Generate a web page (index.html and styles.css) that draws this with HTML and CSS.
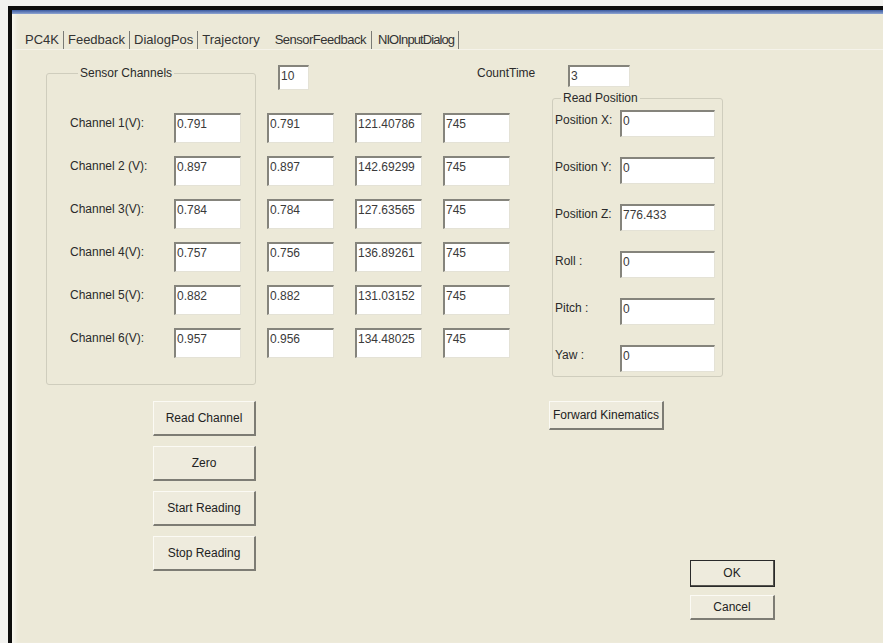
FILE: index.html
```html
<!DOCTYPE html>
<html lang="en">
<head>
<meta charset="utf-8">
<title>SensorFeedback</title>
<link rel="stylesheet" href="styles.css">
</head>
<body>
<div class="window">
  <div class="caption"></div>
  <div class="client">
    <div class="tabs">
      <span class="tab sep first">PC4K</span>
      <span class="tab sep">Feedback</span>
      <span class="tab sep">DialogPos</span>
      <span class="tab">Trajectory</span>
      <span class="tab sep active">SensorFeedback</span>
      <span class="tab sep last">NIOInputDialog</span>
    </div>

    <div class="page">
      <div class="col-left">
        <fieldset class="group sensors">
          <legend>Sensor Channels</legend>
          <div class="channel-rows">
            <span class="lbl">Channel 1(V):</span><div class="edit">0.791</div>
            <span class="lbl">Channel 2 (V):</span><div class="edit">0.897</div>
            <span class="lbl">Channel 3(V):</span><div class="edit">0.784</div>
            <span class="lbl">Channel 4(V):</span><div class="edit">0.757</div>
            <span class="lbl">Channel 5(V):</span><div class="edit">0.882</div>
            <span class="lbl">Channel 6(V):</span><div class="edit">0.957</div>
          </div>
        </fieldset>
        <div class="btn-stack">
          <button class="btn">Read Channel</button>
          <button class="btn">Zero</button>
          <button class="btn">Start Reading</button>
          <button class="btn">Stop Reading</button>
        </div>
      </div>

      <div class="col-main">
        <div class="top-row">
          <div class="edit count">10</div>
          <span class="lbl counttime">CountTime</span>
          <div class="edit time">3</div>
        </div>
        <div class="lower">
          <div class="readings">
            <div class="edit">0.791</div><div class="edit">121.40786</div><div class="edit">745</div>
            <div class="edit">0.897</div><div class="edit">142.69299</div><div class="edit">745</div>
            <div class="edit">0.784</div><div class="edit">127.63565</div><div class="edit">745</div>
            <div class="edit">0.756</div><div class="edit">136.89261</div><div class="edit">745</div>
            <div class="edit">0.882</div><div class="edit">131.03152</div><div class="edit">745</div>
            <div class="edit">0.956</div><div class="edit">134.48025</div><div class="edit">745</div>
          </div>
          <div class="col-right">
            <fieldset class="group position">
              <legend>Read Position</legend>
              <div class="pos-rows">
                <span class="lbl">Position X:</span><div class="edit">0</div>
                <span class="lbl">Position Y:</span><div class="edit">0</div>
                <span class="lbl">Position Z:</span><div class="edit">776.433</div>
                <span class="lbl">Roll :</span><div class="edit">0</div>
                <span class="lbl">Pitch :</span><div class="edit">0</div>
                <span class="lbl">Yaw :</span><div class="edit">0</div>
              </div>
            </fieldset>
            <button class="btn fk">Forward Kinematics</button>
            <div class="dlg-buttons">
              <button class="btn default">OK</button>
              <button class="btn cancel">Cancel</button>
            </div>
          </div>
        </div>
      </div>
    </div>
  </div>
</div>
</body>
</html>
```

FILE: styles.css
```css
* {
  box-sizing: border-box;
}

html,
body {
  margin: 0;
  height: 100%;
}

body {
  background: #f2f2ef;
  font-family: "Liberation Sans", Arial, sans-serif;
  font-size: 12px;
  color: #262626;
  overflow: hidden;
}

/* dialog frame: dark outer edge with a thin blue caption strip */
.window {
  margin: 6px 0 0 8px;
  height: 637px;
  border-top: 4px solid #0d0d0d;
  border-left: 4px solid #0d0d0d;
  display: flex;
  flex-direction: column;
  background: #ece9d8;
}

.caption {
  height: 4px;
  background: linear-gradient(#39599f, #8ea4d2);
}

.client {
  flex: 1;
  box-shadow: inset 6px 0 4px -3px #f8f7f1;
}

/* tab strip */
.tabs {
  height: 36px;
  padding: 17px 0 0 13px;
  display: flex;
  align-items: flex-start;
  font-size: 13px;
  color: #333;
  border-bottom: 1px solid #f5f3ea;
}

.tab {
  line-height: 18px;
  padding: 0 4px;
  white-space: nowrap;
}

.tab.first {
  padding-left: 0;
}

.tab.sep {
  border-right: 1px solid #7a7a75;
}

.tab.active {
  padding: 0 5px 0 11px;
  letter-spacing: -0.5px;
}

.tab.last {
  padding-left: 6px;
  letter-spacing: -0.9px;
}

/* tab page body */
.page {
  display: flex;
  padding-left: 34px;
}

.col-left {
  width: 210px;
  display: flex;
  flex-direction: column;
}

.group {
  margin: 0;
  border: 1px solid #cfcdbd;
  border-radius: 3px;
  min-width: 0;
}

.group legend {
  padding: 0 2px;
  line-height: 14px;
  color: #2a2a2a;
}

.sensors {
  margin-top: 16px;
  width: 210px;
  padding: 33px 0 26px 23px;
}

.sensors legend {
  margin-left: 8px;
}

.channel-rows {
  display: grid;
  grid-template-columns: 104px 67px;
  grid-auto-rows: 30px;
  row-gap: 13px;
}

.lbl {
  line-height: 14px;
  padding-top: 3px;
  white-space: nowrap;
  color: #2a2a2a;
}

/* sunken edit box */
.edit {
  background: #fff;
  border-top: 2px solid #85847c;
  border-left: 2px solid #85847c;
  border-right: 1px solid #e4e2d6;
  border-bottom: 1px solid #e4e2d6;
  padding: 2px 0 0 1px;
  line-height: 14px;
  color: #3a3a3a;
  white-space: nowrap;
  overflow: hidden;
}

/* raised push buttons */
.btn {
  font: inherit;
  color: #222;
  background: #eeebdd;
  border-top: 1px solid #fbfaf4;
  border-left: 1px solid #fbfaf4;
  border-right: 2px solid #7d7c74;
  border-bottom: 2px solid #7d7c74;
  padding: 0;
  margin: 0;
  text-align: center;
  white-space: nowrap;
}

.btn-stack {
  margin: 16px 0 0 107px;
  display: flex;
  flex-direction: column;
  gap: 10px;
}

.btn-stack .btn {
  width: 103px;
  height: 35px;
}

.col-main {
  margin-left: 11px;
  display: flex;
  flex-direction: column;
}

.top-row {
  margin-top: 15px;
  display: flex;
  align-items: flex-start;
}

.edit.count {
  margin-left: 11px;
  width: 31px;
  height: 25px;
}

.counttime {
  margin-left: 168px;
  width: 91px;
  padding-top: 1px;
}

.edit.time {
  width: 62px;
  height: 22px;
}

.lower {
  display: flex;
  align-items: flex-start;
}

.readings {
  margin-top: 23px;
  display: grid;
  grid-template-columns: 88px 88px 67px;
  grid-auto-rows: 30px;
  row-gap: 13px;
}

.readings .edit {
  width: 67px;
}

.col-right {
  margin: 1px 0 0 42px;
  display: flex;
  flex-direction: column;
  align-items: flex-start;
}

.position {
  width: 171px;
  padding: 5px 0 4px 2px;
}

.position legend {
  margin-left: 6px;
}

.pos-rows {
  display: grid;
  grid-template-columns: 65px 95px;
  grid-auto-rows: 27px;
  row-gap: 20px;
}

.btn.fk {
  margin: 24px 0 0 -3px;
  width: 115px;
  height: 29px;
}

.dlg-buttons {
  margin: 130px 0 0 138px;
  display: flex;
  flex-direction: column;
  gap: 8px;
}

.dlg-buttons .btn {
  width: 85px;
}

.btn.default {
  height: 27px;
  outline: 1px solid #2a2a2a;
  outline-offset: -1px;
  border-right-color: #55544e;
  border-bottom-color: #55544e;
}

.btn.cancel {
  height: 25px;
}
```
